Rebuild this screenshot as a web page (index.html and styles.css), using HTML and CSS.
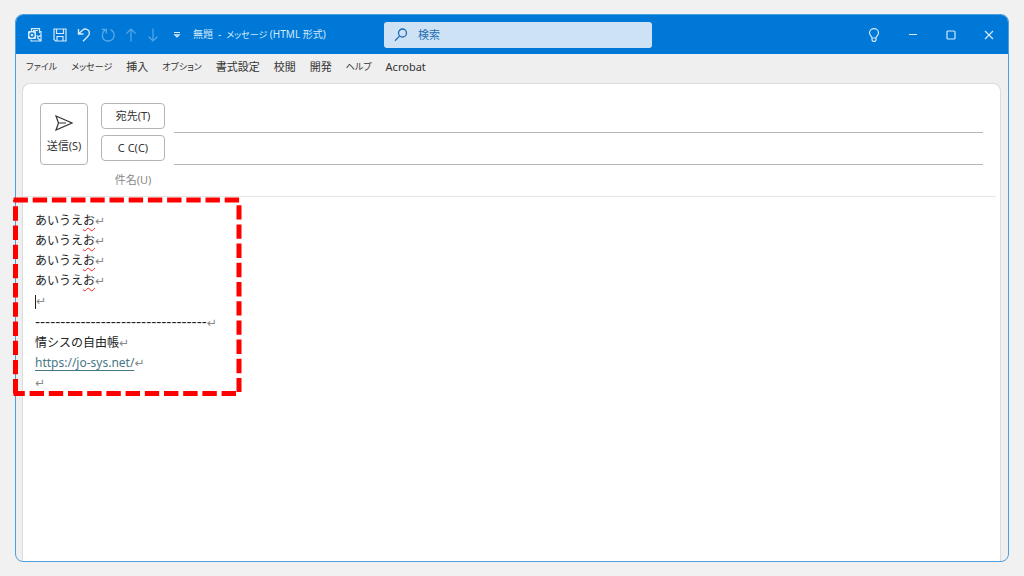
FILE: index.html
```
<!DOCTYPE html>
<html lang="ja">
<head>
<meta charset="utf-8">
<meta name="viewport" content="width=device-width, initial-scale=1">
<title>無題 - メッセージ (HTML 形式)</title>
<link rel="stylesheet" href="styles.css">
</head>
<body>
<div class="window">
  <header class="titlebar">
    <div class="quick">
      <svg class="app-icon" width="16" height="16" viewBox="0 0 16 16" fill="none" stroke="currentColor" stroke-width="1.2" aria-hidden="true">
        <path d="M4.500 4V1.600h8V6M6 3.500h5M12.500 4.500h1.500V9M9.500 8.500l2 1.300L14 8M4 12.500V14h10V8.500M10 10.500l4 3.500"/>
        <rect x="1" y="4" width="8" height="8" rx="1" fill="#d5e9f9" stroke="none"/>
        <circle cx="5" cy="8" r="2" stroke="#0078d7" stroke-width="1.300"/>
      </svg>
      <button class="tool" aria-label="上書き保存"><svg width="14" height="14" viewBox="0 0 14 14" fill="none" stroke="currentColor" stroke-width="1.200"><path d="M1 1h12v12H2.500L1 11.500zM3.500 1v4.500h7V1M4 13V8.500h6V13"/></svg></button>
      <button class="tool" aria-label="元に戻す"><svg width="14" height="14" viewBox="0 0 14 14" fill="none" stroke="currentColor" stroke-width="1.400"><path d="M1.500 1v5h5M1.800 5.700L5.500 2.300C8-.1 12.300 1.200 12.400 5c0 1.500-.7 2.500-1.700 3.500L6 13.300"/></svg></button>
      <button class="tool faded" aria-label="やり直し"><svg width="14" height="14" viewBox="0 0 14 14" fill="none" stroke="currentColor" stroke-width="1.300"><path d="M.8 1.500h4.500v4M4.800 1.800C-.2 4.500.2 13 7 13c7 0 8-8.500 2.500-11.300"/></svg></button>
      <button class="tool faded" aria-label="前のアイテム"><svg width="12" height="14" viewBox="0 0 12 14" fill="none" stroke="currentColor" stroke-width="1.200"><path d="M6 13.500V1M1.500 5.500L6 1l4.500 4.500"/></svg></button>
      <button class="tool faded" aria-label="次のアイテム"><svg width="12" height="14" viewBox="0 0 12 14" fill="none" stroke="currentColor" stroke-width="1.200"><path d="M6 .5V13M1.500 8.500L6 13l4.500-4.500"/></svg></button>
      <button class="tool customize" aria-label="クイック アクセス ツール バーのカスタマイズ"><svg width="8" height="8" viewBox="0 0 8 8" fill="none" stroke="currentColor" stroke-width="1.200"><path d="M1 1.500h6M1.800 3.800L4 6l2.200-2.200z"/></svg></button>
    </div>
    <h1 class="title">無題&ensp;-&ensp;<span class="kana">メッセージ</span> (HTML 形式)</h1>
    <label class="search">
      <svg width="14" height="14" viewBox="0 0 14 14" fill="none" stroke="currentColor" stroke-width="1.300" aria-hidden="true"><circle cx="8.500" cy="5" r="4"/><path d="M5.700 7.900L1 12.700"/></svg>
      <input type="search" placeholder="検索" aria-label="検索">
    </label>
    <div class="controls">
      <button aria-label="ヒント"><svg width="12" height="14" viewBox="0 0 12 14" fill="none" stroke="currentColor" stroke-width="1.200"><path d="M4 10C4 8 1.500 7.500 1.500 5a4.500 4.300 0 0 1 9 0C10.500 7.500 8 8 8 10zM4 10v2l1 1.300h2L8 12v-2"/></svg></button>
      <button aria-label="最小化"><svg width="10" height="10" viewBox="0 0 10 10" fill="none" stroke="currentColor"><path d="M1 4.500h8"/></svg></button>
      <button aria-label="最大化"><svg width="10" height="10" viewBox="0 0 10 10" fill="none" stroke="currentColor" stroke-width="1.200"><rect x="1" y="1" width="8" height="8" rx="1"/></svg></button>
      <button aria-label="閉じる"><svg width="10" height="10" viewBox="0 0 10 10" fill="none" stroke="currentColor" stroke-width="1.200"><path d="M1 1l8 8M9 1L1 9"/></svg></button>
    </div>
  </header>
  <nav class="menu">
    <button class="kana">ファイル</button>
    <button class="kana">メッセージ</button>
    <button>挿入</button>
    <button class="kana">オプション</button>
    <button>書式設定</button>
    <button>校閲</button>
    <button>開発</button>
    <button class="kana">ヘルプ</button>
    <button>Acrobat</button>
  </nav>
  <main class="sheet">
    <form class="compose">
      <button type="button" class="box send">
        <svg width="18" height="16" viewBox="0 0 18 16" fill="none" stroke="currentColor" stroke-width="1.200" aria-hidden="true"><path d="M1 1l16 7L1 15l2.500-7zM3.500 8H11"/></svg>
        送信(S)
      </button>
      <div class="fields">
        <button type="button" class="box">宛先(T)</button>
        <input type="text" class="line" aria-label="宛先">
        <button type="button" class="box">C C(C)</button>
        <input type="text" class="line" aria-label="CC">
        <label class="subject" for="subject">件名(U)</label>
        <input type="text" id="subject">
      </div>
    </form>
    <div class="message">
      <div class="body">
        <p>あいうえ<span class="typo">お</span><span class="mark">↵</span></p>
        <p>あいうえ<span class="typo">お</span><span class="mark">↵</span></p>
        <p>あいうえ<span class="typo">お</span><span class="mark">↵</span></p>
        <p>あいうえ<span class="typo">お</span><span class="mark">↵</span></p>
        <p><span class="caret"></span><span class="mark">↵</span></p>
      </div>
      <div class="signature">
        <p><span class="rule">----------------------------------</span><span class="mark">↵</span></p>
        <p>情シスの自由帳<span class="mark">↵</span></p>
        <p><a href="https://jo-sys.net/">https://jo-sys.net/</a><span class="mark">↵</span></p>
        <p><span class="mark">↵</span></p>
      </div>
      <svg class="highlight" width="230" height="200" viewBox="0 0 230 200" fill="none" stroke="#f00" stroke-width="5" stroke-dasharray="14.400 4.800" aria-hidden="true">
        <path d="M.5 3H229"/><path d="M226 8.200V195"/><path d="M223 196.500H.5"/><path d="M2.500 196.500V3"/>
      </svg>
    </div>
  </main>
</div>
</body>
</html>
```

FILE: styles.css
```
* { box-sizing: border-box; }

body {
  margin: 0;
  height: 100vh;
  padding: 14px 15px;
  background: #f1f1f1;
  color: #333;
  font: 11px/16px "Noto Sans", "Noto Sans CJK JP", sans-serif;
}

button, input {
  border: 0;
  padding: 0;
  background: none;
  color: inherit;
  font: inherit;
}

input { min-width: 0; outline: 0; }
svg { display: block; flex: none; }
p { margin: 0; }

.window {
  height: 100%;
  display: flex;
  flex-direction: column;
  border: 1px solid #4ba0e0;
  border-radius: 8px;
  background: #efefef;
}

.titlebar {
  display: grid;
  grid-template-columns: 368px minmax(120px, 268px) 1fr;
  grid-template-areas: "left search right";
  align-items: center;
  height: 39px;
  flex: none;
  border-radius: 7px 7px 0 0;
  background: #0078d7;
  color: #d5e9f9;
}

.quick {
  grid-area: left;
  display: flex;
  align-items: center;
  gap: 10px;
  padding-left: 11px;
}

.tool.faded { color: #58a7e5; }
.tool.customize { margin-left: 4px; }

.title {
  grid-area: left;
  margin: 0;
  padding-left: 177px;
  font-size: 10px;
  font-weight: 400;
  white-space: nowrap;
}

.kana {
  font-size: 9px;
  font-feature-settings: "palt";
}

.search {
  grid-area: search;
  display: flex;
  align-items: center;
  gap: 10px;
  height: 26px;
  padding: 0 10px;
  border-radius: 3px;
  background: #cde2f4;
  color: #1f6db5;
}

.search input { flex: 1; }
.search input::placeholder { color: inherit; opacity: 1; }

.controls {
  grid-area: right;
  display: flex;
  justify-content: flex-end;
  gap: 28px;
  align-items: center;
  padding-right: 14px;
}

.menu {
  display: flex;
  align-items: center;
  gap: 14px;
  height: 29px;
  padding: 0 10px 4px;
  flex: none;
}

.menu button { white-space: nowrap; }

.sheet {
  flex: 1;
  margin: 0 7px 0 6px;
  border: 1px solid #dcdcdc;
  border-bottom: 0;
  border-radius: 8px 8px 0 0;
  background: #fff;
}

.compose {
  display: flex;
  align-items: flex-start;
  gap: 13px;
  margin-right: 4px;
  padding: 19px 13px 3px 17px;
  border-bottom: 1px solid #e6e6e6;
}

.box {
  border: 1px solid #b4b4b4;
  border-radius: 4px;
  background: #fff;
}

.send {
  display: flex;
  flex-direction: column;
  align-items: center;
  justify-content: center;
  gap: 7px;
  width: 48px;
  height: 62px;
}

.fields {
  flex: 1;
  display: grid;
  grid-template-columns: 64px 1fr;
  grid-auto-rows: 26px;
  gap: 6px 9px;
}

.line {
  height: 30px;
  border-bottom: 1px solid #b8b4b4;
}

.subject {
  color: #888;
  text-align: center;
  line-height: 26px;
}

.message {
  position: relative;
  padding: 14px 12px;
  color: #222;
  font-size: 12px;
}

.body p, .signature p { height: 20px; line-height: 20px; }
.signature { padding-top: 2px; }

.typo {
  text-decoration: underline wavy #f22 1px;
  text-underline-offset: 2px;
}

.mark {
  color: #888;
  font: 12px/16px "DejaVu Sans", sans-serif;
}

.caret {
  display: inline-block;
  width: 1px;
  height: 14px;
  background: #222;
  vertical-align: middle;
}

.rule { font: 14px/16px "DejaVu Sans", sans-serif; }

.message a {
  color: #467886;
  text-decoration: underline 1px;
  text-underline-offset: 3px;
}

.highlight {
  position: absolute;
  top: 0;
  left: -10px;
}
```
